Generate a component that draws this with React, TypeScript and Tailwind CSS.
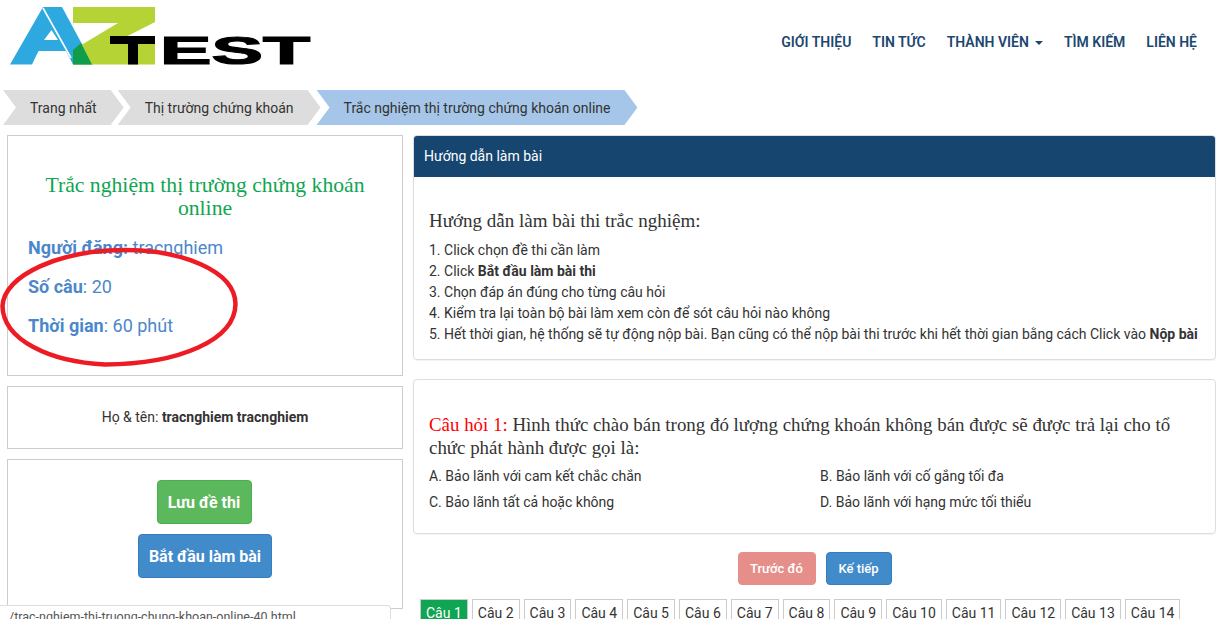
const nav = ["GIỚI THIỆU", "TIN TỨC", "THÀNH VIÊN", "TÌM KIẾM", "LIÊN HỆ"];
const crumbs = [
  { t: "Trang nhất", c: "bg-[#dddddd]" },
  { t: "Thị trường chứng khoán", c: "bg-[#dddddd] ml-[-6px]" },
  { t: "Trắc nghiệm thị trường chứng khoán online", c: "bg-[#a5c6e8] ml-[-4px]" },
];
const steps = [
  <>1. Click chọn đề thi cần làm</>,
  <>2. Click <b className="font-bold">Bắt đầu làm bài thi</b></>,
  <>3. Chọn đáp án đúng cho từng câu hỏi</>,
  <>4. Kiểm tra lại toàn bộ bài làm xem còn để sót câu hỏi nào không</>,
  <>5. Hết thời gian, hệ thống sẽ tự động nộp bài. Bạn cũng có thể nộp bài thi trước khi hết thời gian bằng cách Click vào <b className="font-bold">Nộp bài</b></>,
];
const serif = "font-['Liberation_Serif',serif]";

function Logo() {
  return (
    <svg width="320" height="90" viewBox="0 0 320 90" className="block">
      <path fill="#2ea9e0" fillRule="evenodd" d="M10 64.5 43 7H62L93 64.5H73L66 51H38.5L32 64.5ZM51.5 30 44 40H58Z" />
      <path stroke="#fff" strokeWidth="1.6" d="M43 8 71 58" />
      <path fill="#b5d334" d="M73 7H155V22L112 44H155V64.5H73V50L118 23H73Z" />
      <path fill="#0f9d4c" d="M81 43 92 64.5H73V50Z" />
      <rect x="110" y="36" width="45" height="8" fill="#000" />
      <rect x="128" y="36" width="10" height="28.5" fill="#000" />
      <text
        x="160"
        y="64"
        textLength="150"
        lengthAdjust="spacingAndGlyphs"
        fill="#000"
        stroke="#000"
        strokeWidth="1.2"
        fontSize="38"
        fontWeight="900"
        fontFamily="'Liberation Sans', sans-serif"
      >
        EST
      </text>
    </svg>
  );
}

export default function App() {
  return (
    <div className="relative h-[619px] overflow-hidden bg-white font-['Roboto',sans-serif] text-[14px] leading-[21px] text-[#333333]">
      <header className="flex h-[90px] items-start justify-between pr-[28px]">
        <Logo />
        <nav className="mt-[32px] flex gap-[21px] font-semibold text-[#1c4770]">
          {nav.map((n) => (
            <a key={n} className="flex items-center">
              {n}
              {n === "THÀNH VIÊN" && (
                <span className="ml-[6px] h-0 w-0 border-x-[4px] border-t-[4px] border-x-transparent border-t-[#1c4770]" />
              )}
            </a>
          ))}
        </nav>
      </header>

      <div className="flex h-[35px] pl-[3px]">
        {crumbs.map((c) => (
          <div
            key={c.t}
            className={`flex h-full items-center pl-[27px] pr-[27px] pt-[2px] [clip-path:polygon(0_0,calc(100%-13px)_0,100%_50%,calc(100%-13px)_100%,0_100%,13px_50%)] ${c.c}`}
          >
            {c.t}
          </div>
        ))}
      </div>

      <div className="mt-[10px] flex gap-[10px] pl-[7px]">
        <aside className="flex w-[396px] flex-col gap-[10px]">
          <section className="h-[241px] border border-[#cccccc] px-[20px] pt-[38px]">
            <h2 className={`text-center text-[21.7px] leading-[23px] text-[#0fa552] ${serif}`}>
              Trắc nghiệm thị trường chứng khoán online
            </h2>
            <div className="mt-[15px] flex flex-col gap-[13px] text-[18px] leading-[26px] text-[#4b87cb]">
              <p><b className="font-bold">Người đăng:</b> tracnghiem</p>
              <p><b className="font-bold">Số câu</b>: 20</p>
              <p><b className="font-bold">Thời gian</b>: 60 phút</p>
            </div>
          </section>
          <section className="flex h-[63px] items-center justify-center border border-[#cccccc]">
            <p>Họ &amp; tên: <b className="font-bold">tracnghiem tracnghiem</b></p>
          </section>
          <section className="flex h-[150px] flex-col items-center gap-[10px] border border-[#cccccc] pr-[2px] pt-[20px] text-[16px] font-bold text-white">
            <button className="h-[44px] w-[95px] rounded border border-[#4cae4c] bg-[#5cb85c]">Lưu đề thi</button>
            <button className="ml-[2px] h-[44px] w-[134px] rounded border border-[#357ebd] bg-[#428bca]">Bắt đầu làm bài</button>
          </section>
        </aside>

        <main className="w-[803px]">
          <section className="h-[225px] overflow-hidden rounded border border-[#dddddd] shadow-[0_1px_1px_rgba(0,0,0,0.05)]">
            <div className="flex h-[41px] items-center bg-[#164570] px-[10px] text-white">Hướng dẫn làm bài</div>
            <div className="px-[15px] pt-[32px]">
              <h3 className={`text-[19px] leading-[24px] ${serif}`}>Hướng dẫn làm bài thi trắc nghiệm:</h3>
              <ol className="mt-[7px]">
                {steps.map((s, i) => <li key={i}>{s}</li>)}
              </ol>
            </div>
          </section>
          <section className="mt-[19px] h-[155px] rounded border border-[#dddddd] px-[15px] pt-[33px] shadow-[0_1px_1px_rgba(0,0,0,0.05)]">
            <p className={`text-[18.9px] leading-[23px] ${serif}`}>
              <span className="text-[#ff0000]">Câu hỏi 1:</span> Hình thức chào bán trong đó lượng chứng khoán không bán được sẽ được trả lại cho tổ chức phát hành được gọi là:
            </p>
            <div className="mt-[7px] grid grid-cols-[391px_1fr] gap-y-[5px]">
              <p>A. Bảo lãnh với cam kết chắc chắn</p>
              <p>B. Bảo lãnh với cố gắng tối đa</p>
              <p>C. Bảo lãnh tất cả hoặc không</p>
              <p>D. Bảo lãnh với hạng mức tối thiểu</p>
            </div>
          </section>
          <div className="mt-[18px] flex justify-center gap-[10px] text-[13px] font-medium text-white">
            <button className="h-[33px] w-[78px] rounded border border-[#e58e8a] bg-[#e58e8a]">Trước đó</button>
            <button className="h-[33px] w-[66px] rounded border border-[#357ebd] bg-[#428bca]">Kế tiếp</button>
          </div>
          <div className="mt-[14px] flex gap-[4px] pl-[7px]">
            {Array.from({ length: 14 }, (_, i) => (
              <a
                key={i}
                className={`border border-[#cccccc] px-[5px] py-[3px] whitespace-nowrap ${i === 0 ? "bg-[#0fa552] text-white" : ""}`}
              >
                {`Câu ${i + 1}`}
              </a>
            ))}
          </div>
        </main>
      </div>

      <svg width="245" height="125" viewBox="0 245 245 125" className="absolute left-0 top-[245px]">
        <path
          fill="none"
          stroke="#ed1c24"
          strokeWidth="4.500"
          d="M125 250C180 250 235 270 235.500 304C235 340 180 364 105 364.500C50 362 3 340 2.500 306C4 275 60 250 125 250Z"
        />
      </svg>

      <div className="absolute bottom-0 left-0 h-[14px] w-[391px] overflow-hidden rounded-tr border-r border-t border-[#dddddd] bg-white pl-[9px] text-[12.5px] leading-[22px] text-[#555555]">
        /trac-nghiem-thi-truong-chung-khoan-online-40.html
      </div>
    </div>
  );
}
